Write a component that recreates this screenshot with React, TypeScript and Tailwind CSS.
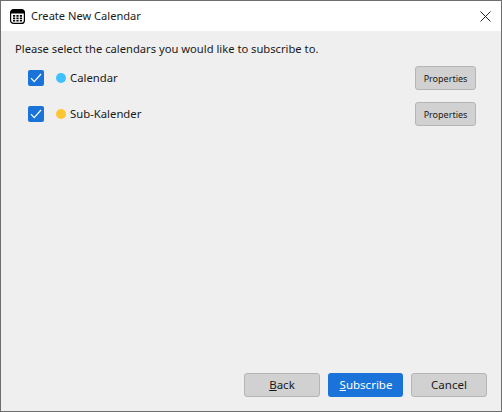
import React from 'react';

function CalendarIcon() {
  return (
    <svg width="15" height="15" viewBox="0 0 15 15" className="shrink-0">
      <rect x="0.6" y="0.6" width="13.8" height="13.8" rx="3" fill="#fff" stroke="#000" strokeWidth="1.2" />
      <path d="M0.6 4.5V3.6a3 3 0 0 1 3-3h7.8a3 3 0 0 1 3 3v.9z" fill="#000" />
      <path
        d="M3 6h2.2v1.7H3zM6.4 6h2.2v1.7H6.4zM9.8 6H12v1.7H9.8zM3 8.6h2.2v1.6H3zM6.4 8.6h2.2v1.6H6.4zM9.8 8.6H12v1.6H9.8zM3 11h2.2v1.5H3zM6.4 11h2.2v1.5H6.4zM9.8 11H12v1.5H9.8z"
        fill="#000"
      />
    </svg>
  );
}

function CalendarRow({ name, color }: { name: string; color: string }) {
  return (
    <div className="flex h-[24px] items-center">
      <div className="flex h-4 w-4 items-center justify-center rounded-[2px] bg-[#1a73d9]">
        <svg width="12" height="10" viewBox="0 0 12 10" fill="none" stroke="#fff" strokeWidth="1.2">
          <path d="M1 5.2 4.2 8.6 11 1" />
        </svg>
      </div>
      <span className={`ml-[12px] h-[10px] w-[10px] rounded-full ${color}`} />
      <span className="ml-[4px] text-[11.3px] text-[#1a1a1a]">{name}</span>
      <button className="ml-auto h-[24px] w-[61px] rounded-[3px] border border-[#b5b5b5] bg-[#d1d1d1] pt-[2px] text-[9px] text-[#1a1a1a]">
        Properties
      </button>
    </div>
  );
}

function FooterButton({ children, primary, width }: { children: React.ReactNode; primary?: boolean; width: string }) {
  return (
    <button
      className={
        primary
          ? `h-[24px] ${width} rounded-[3px] bg-[#1a73d9] pl-[1px] text-[11.5px] text-white`
          : `h-[24px] ${width} rounded-[3px] border border-[#b5b5b5] bg-[#d1d1d1] text-[11.5px] text-[#1a1a1a]`
      }
    >
      {children}
    </button>
  );
}

export default function App() {
  return (
    <div
      className="flex h-[412px] w-[502px] flex-col border border-t-0 border-[#6e6e6e] bg-[#efefef]"
      style={{ fontFamily: '"Noto Sans", "Open Sans", sans-serif' }}
    >
      {/* title bar */}
      <div className="flex h-[31px] items-center border-t border-[#6e6e6e] bg-white pl-[9px] pr-[10px]">
        <CalendarIcon />
        <span className="ml-[6px] text-[11.1px] text-[#1a1a1a]">Create New Calendar</span>
        <svg width="11" height="11" viewBox="0 0 11 11" className="ml-auto" stroke="#222" strokeWidth="1">
          <path d="M0.5 0.5l10 10M10.5 0.5l-10 10" />
        </svg>
      </div>

      {/* body */}
      <div className="flex flex-1 flex-col pl-[14px] pr-[14px]">
        <p className="mt-[9px] text-[11.2px] leading-[17px] text-[#1a1a1a]">
          Please select the calendars you would like to subscribe to.
        </p>
        <div className="mt-[9px] flex flex-col gap-[12px] pl-[13px] pr-[11px]">
          <CalendarRow name="Calendar" color="bg-[#3dc1ff]" />
          <CalendarRow name="Sub-Kalender" color="bg-[#ffc633]" />
        </div>
        <div className="mb-[14px] mt-auto flex justify-end gap-[8px]">
          <FooterButton width="w-[76px]">
            <u>B</u>ack
          </FooterButton>
          <FooterButton primary width="w-[75px]">
            <u>S</u>ubscribe
          </FooterButton>
          <FooterButton width="w-[76px]">Cancel</FooterButton>
        </div>
      </div>
    </div>
  );
}
